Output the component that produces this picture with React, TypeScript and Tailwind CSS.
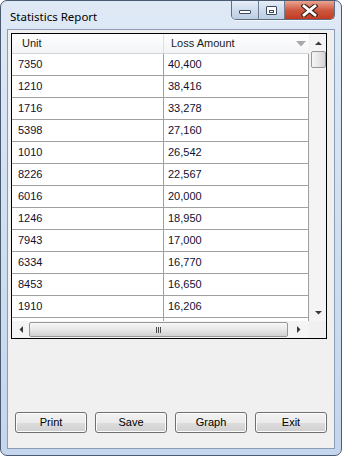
const rows = [
  ["7350", "40,400"],
  ["1210", "38,416"],
  ["1716", "33,278"],
  ["5398", "27,160"],
  ["1010", "26,542"],
  ["8226", "22,567"],
  ["6016", "20,000"],
  ["1246", "18,950"],
  ["7943", "17,000"],
  ["6334", "16,770"],
  ["8453", "16,650"],
  ["1910", "16,206"],
];

const font = { fontFamily: '"Liberation Sans", Arial, sans-serif' };

const CaptionButtons = () => (
  <div className="flex h-[19px] overflow-hidden rounded-b-[5px] border border-t-0 border-[#5d6d82] shadow-[0_1px_0_#ffffffaa]">
    <div className="flex w-[27px] items-center justify-center border-r border-[#6e7f95] bg-gradient-to-b from-[#e6eef8] via-[#cfdcec] to-[#bccde2]">
      <div className="mt-[3px] h-[4px] w-[12px] rounded-[1px] border border-[#3b4a5e] bg-white" />
    </div>
    <div className="flex w-[26px] items-center justify-center border-r border-[#6e7f95] bg-gradient-to-b from-[#e6eef8] via-[#cfdcec] to-[#bccde2]">
      <div className="flex h-[9px] w-[11px] items-end justify-center rounded-[1px] border border-[#3b4a5e] bg-white pb-[1px]">
        <div className="h-[3px] w-[5px] border border-[#3b4a5e]" />
      </div>
    </div>
    <div className="flex w-[49px] items-center justify-center bg-gradient-to-b from-[#e8a493] via-[#cf5940] to-[#c23a22]">
      <svg width="17" height="13" viewBox="0 0 17 13">
        <path d="M3 2 L14 11 M14 2 L3 11" stroke="#3a2420" strokeWidth="5" strokeLinecap="square" />
        <path d="M3 2 L14 11 M14 2 L3 11" stroke="#ffffff" strokeWidth="2.8" strokeLinecap="square" />
      </svg>
    </div>
  </div>
);

const Arrow = ({ dir }: { dir: "up" | "down" | "left" | "right" }) => {
  const d = {
    up: "M0 4 L3.5 0.5 L7 4 Z",
    down: "M0 0 L7 0 L3.5 3.5 Z",
    left: "M4 0 L4 7 L0.5 3.5 Z",
    right: "M0 0 L3.5 3.5 L0 7 Z",
  }[dir];
  const vertical = dir === "up" || dir === "down";
  return (
    <svg width={vertical ? 7 : 4} height={vertical ? 4 : 7} viewBox={vertical ? "0 0 7 4" : "0 0 4 7"}>
      <path d={d} fill="#3a3a3a" />
    </svg>
  );
};

const WinButton = ({ label }: { label: string }) => (
  <button
    className="h-[21px] w-[72px] rounded-[3px] border border-[#707070] bg-[linear-gradient(#f2f2f2_0%,#ebebeb_50%,#dddddd_51%,#cfcfcf_100%)] text-[11px] leading-none text-black shadow-[inset_0_0_0_1px_#fcfcfc]"
    style={font}
  >
    {label}
  </button>
);

export default function App() {
  return (
    <div className="flex h-[456px] w-[342px] flex-col rounded-[7px] border border-[#4a5a70] bg-gradient-to-b from-[#dfe9f6] via-[#cfdff1] to-[#c3d6ed] px-[6px] pb-[6px]">
      <div className="flex h-[28px] items-start justify-between">
        <span
          className="mt-[9px] pl-[3px] text-[11.5px] leading-[14px] text-black"
          style={{ fontFamily: '"Noto Sans", "Liberation Sans", sans-serif' }}
        >
          Statistics Report
        </span>
        <CaptionButtons />
      </div>

      <div className="flex flex-1 flex-col border border-[#8c9db3] bg-[#f0f0f0] pl-[3px] pt-[3px]">
        <div className="flex h-[306px] w-[316px] flex-col border border-black bg-white" style={font}>
          <div className="flex h-[287px]">
            <div className="w-[297px] overflow-hidden">
              <div className="flex h-[20px] border-b border-[#d5d5d5] bg-gradient-to-b from-white to-[#f3f4f6] text-[11px] leading-none text-[#1b1b1b]">
                <div className="flex w-[152px] items-center border-r border-[#e0e0e0] pl-[10px]">Unit</div>
                <div className="flex flex-1 items-center justify-between pl-[7px] pr-[3px]">
                  <span>Loss Amount</span>
                  <svg width="10" height="6" viewBox="0 0 10 6">
                    <path d="M0 0 L10 0 L5 5.5 Z" fill="#a8a8a8" />
                  </svg>
                </div>
              </div>
              {rows.map(([unit, amount]) => (
                <div key={unit} className="flex h-[22px] border-b border-[#a0a0a0] text-[11px] leading-none text-[#101030]">
                  <div className="flex w-[152px] items-center border-r border-[#a0a0a0] pl-[6px]">{unit}</div>
                  <div className="flex flex-1 items-center border-r border-[#a0a0a0] pl-[4px]">{amount}</div>
                </div>
              ))}
              <div className="flex h-[22px]">
                <div className="w-[152px] border-r border-[#a0a0a0]" />
                <div className="flex-1 border-r border-[#a0a0a0]" />
              </div>
            </div>
            <div className="flex w-[17px] flex-col items-center border-l border-[#f0f0f0] bg-[#f4f4f4]">
              <div className="flex h-[17px] w-full items-center justify-center">
                <Arrow dir="up" />
              </div>
              <div className="h-[17px] w-[15px] rounded-[2px] border border-[#979797] bg-gradient-to-r from-[#f5f5f5] via-[#e6e6e6] to-[#d4d4d4]" />
              <div className="flex-1" />
              <div className="flex h-[17px] w-full items-center justify-center">
                <Arrow dir="down" />
              </div>
            </div>
          </div>
          <div className="flex h-[17px]">
            <div className="flex w-[297px] items-center bg-[#f4f4f4]">
              <div className="flex h-full w-[17px] items-center justify-center">
                <Arrow dir="left" />
              </div>
              <div className="flex h-[15px] w-[259px] items-center justify-center rounded-[2px] border border-[#979797] bg-gradient-to-b from-[#f7f7f7] via-[#e8e8e8] to-[#d2d2d2]">
                <div className="flex gap-[1px]">
                  <div className="h-[6px] w-[1px] bg-[#4a4a4a]" />
                  <div className="h-[6px] w-[1px] bg-[#4a4a4a]" />
                  <div className="h-[6px] w-[1px] bg-[#4a4a4a]" />
                </div>
              </div>
              <div className="flex h-full flex-1 items-center justify-center">
                <Arrow dir="right" />
              </div>
            </div>
            <div className="flex-1 bg-[#f0f0f0]" />
          </div>
        </div>

        <div className="mt-auto mb-[15px] flex gap-[8px] pl-[4px]">
          <WinButton label="Print" />
          <WinButton label="Save" />
          <WinButton label="Graph" />
          <WinButton label="Exit" />
        </div>
      </div>
    </div>
  );
}
